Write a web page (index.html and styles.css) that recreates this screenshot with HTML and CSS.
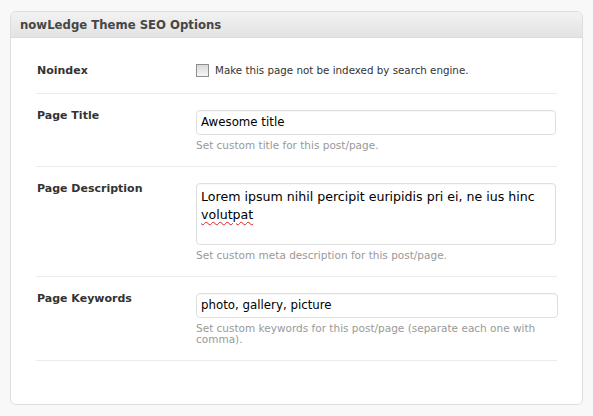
FILE: index.html
```html
<!DOCTYPE html>
<html>
<head>
<meta charset="utf-8">
<link rel="stylesheet" href="styles.css">
</head>
<body>
<div class="panel">
  <div class="panel-head">nowLedge Theme SEO Options</div>
  <div class="panel-body">
    <div class="row row-check">
      <div class="label">Noindex</div>
      <div class="field check-field">
        <span class="checkbox"></span>
        <span class="check-text">Make this page not be indexed by search engine.</span>
      </div>
    </div>
    <div class="row">
      <div class="label">Page Title</div>
      <div class="field">
        <div class="input">Awesome title</div>
        <div class="help">Set custom title for this post/page.</div>
      </div>
    </div>
    <div class="row">
      <div class="label">Page Description</div>
      <div class="field">
        <div class="textarea">Lorem ipsum nihil percipit euripidis pri ei, ne ius hinc <span class="misspelled">volutpat</span></div>
        <div class="help">Set custom meta description for this post/page.</div>
      </div>
    </div>
    <div class="row">
      <div class="label">Page Keywords</div>
      <div class="field">
        <div class="input">photo, gallery, picture</div>
        <div class="help help-narrow">Set custom keywords for this post/page (separate each one with comma).</div>
      </div>
    </div>
  </div>
</div>
</body>
</html>
```

FILE: styles.css
```css
html, body {
  margin: 0;
  padding: 0;
  background: #f8f8f8;
}
body {
  padding: 11px 10px 0 10px;
  font-family: "DejaVu Sans", Verdana, sans-serif;
  color: #333;
}
.panel {
  width: 573px;
  height: 394px;
  box-sizing: border-box;
  border: 1px solid #dedede;
  border-radius: 6px;
  background: #fff;
  overflow: hidden;
}
.panel-head {
  height: 26px;
  box-sizing: border-box;
  border-bottom: 1px solid #dcdcdc;
  background: linear-gradient(#f2f2f2, #e3e3e3);
  padding: 6px 0 0 9px;
  font-size: 11.7px;
  font-weight: bold;
  color: #464646;
  line-height: 14px;
}
.panel-body {
  padding: 10px 25px 0 25px;
}
.row {
  display: flex;
  border-bottom: 1px solid #ebebeb;
  padding: 16px 0 15px 0;
}
.row-check {
  padding: 16px 0 16px 0;
  align-items: center;
}
.label {
  width: 159px;
  flex: none;
  padding-left: 1px;
  font-size: 11px;
  font-weight: bold;
  color: #333;
  line-height: 11px;
}
.row-check .label {
  line-height: 13px;
}
.field {
  flex: 1;
  padding-right: 1px;
}
.check-field {
  display: flex;
  align-items: center;
}
.checkbox {
  width: 11px;
  height: 11px;
  border: 1px solid #8e8e8e;
  background: linear-gradient(#d9d9d9, #f6f6f6);
  flex: none;
  margin-right: 6px;
}
.check-text {
  font-size: 10.3px;
  color: #333;
  line-height: 13px;
}
.input, .textarea {
  box-sizing: border-box;
  border: 1px solid #dfdfdf;
  border-radius: 4px;
  background: #fff;
  color: #000;
  padding: 0 4px;
  box-shadow: inset 0 1px 1px rgba(0,0,0,0.03);
}
.input {
  height: 25px;
  line-height: 23px;
  font-size: 11.8px;
}
.textarea {
  height: 62px;
  padding-top: 4px;
  line-height: 18px;
  font-size: 12.6px;
}
.misspelled {
  text-decoration: underline wavy #e02020;
  text-decoration-thickness: 1px;
  text-underline-offset: 2px;
}
.help {
  font-size: 10.5px;
  color: #999;
  margin-top: 5px;
  line-height: 11px;
}
.help-narrow {
  width: 362px;
}
```
